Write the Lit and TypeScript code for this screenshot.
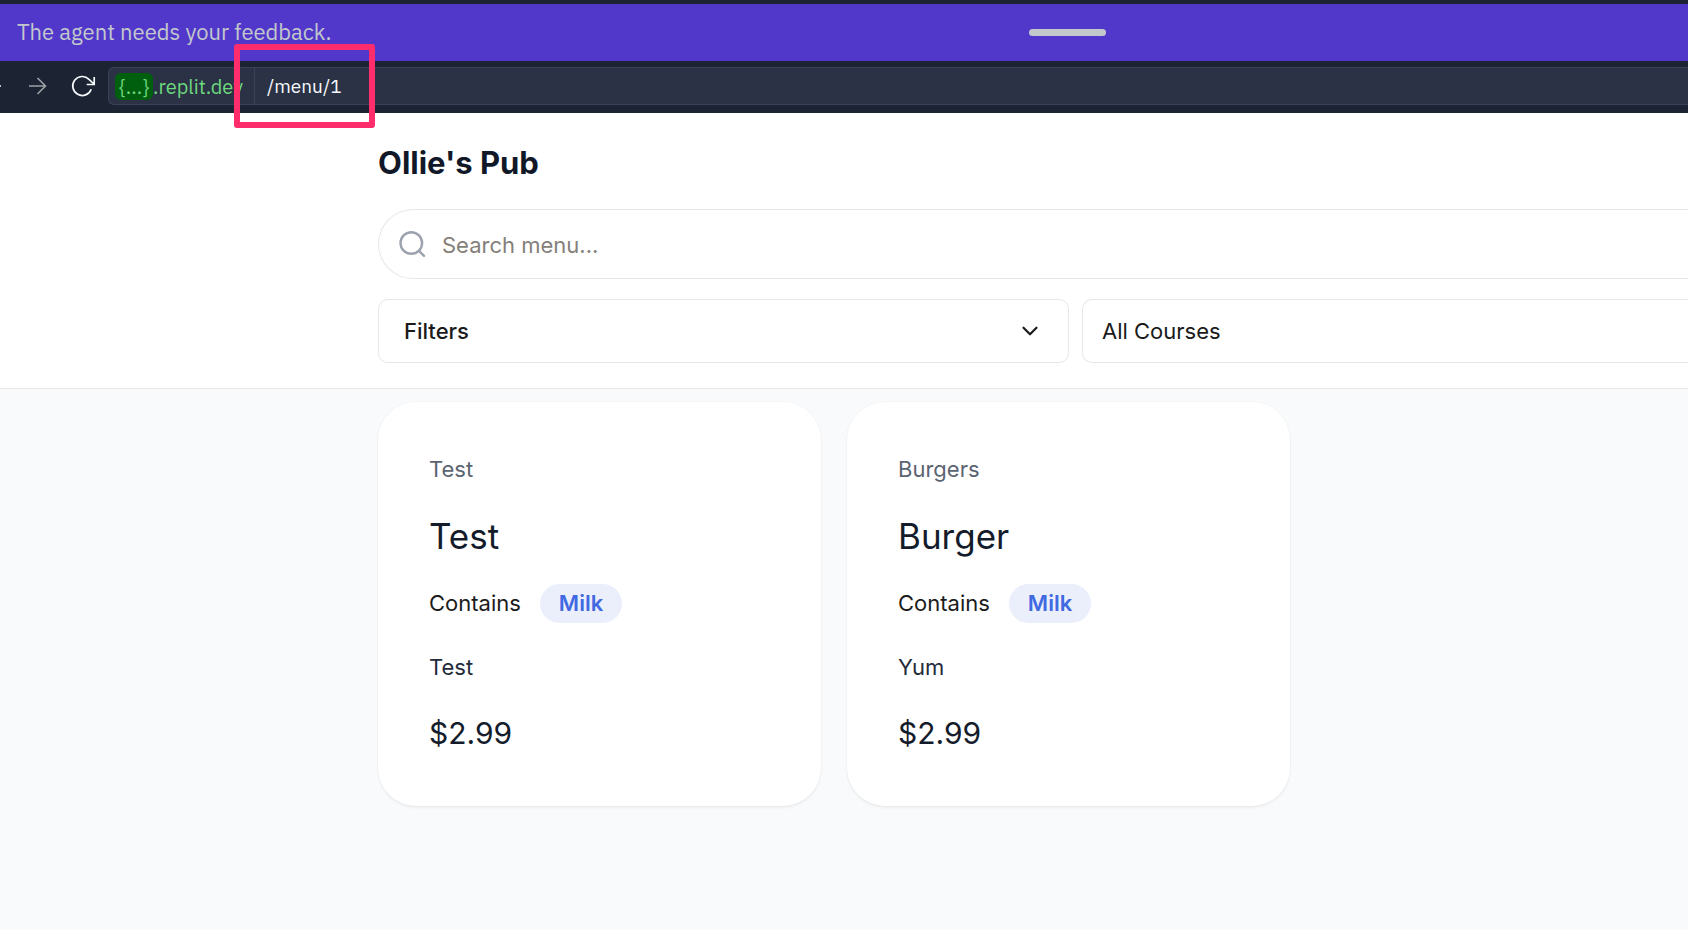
import { LitElement, html, css, svg } from "lit";
import { customElement, property } from "lit/decorators.js";

interface MenuItem {
  course: string;
  name: string;
  allergen: string;
  description: string;
  price: string;
}

const items: MenuItem[] = [
  { course: "Test", name: "Test", allergen: "Milk", description: "Test", price: "$2.99" },
  { course: "Burgers", name: "Burger", allergen: "Milk", description: "Yum", price: "$2.99" },
];

@customElement("menu-card")
export class MenuCard extends LitElement {
  static styles = css`
    :host {
      display: block;
    }
    .card {
      display: flex;
      flex-direction: column;
      gap: 24px;
      padding: 51px 51px 47px;
      border-radius: 38px;
      background: #fff;
      box-shadow: 0 0 1px 1px rgba(15, 23, 42, 0.02), 0 2px 3px rgba(15, 23, 42, 0.05);
    }
    .course,
    .name,
    .description,
    .price {
      margin: 0;
      font-weight: 400;
    }
    .course,
    .description {
      font-size: 22px;
      line-height: 32px;
    }
    .course {
      margin-bottom: 4px;
      color: #5b6472;
    }
    .description {
      color: #232b3a;
    }
    .name {
      font-size: 35px;
      line-height: 47px;
      color: #141c2b;
    }
    .price {
      font-size: 30px;
      line-height: 52px;
      color: #141c2b;
    }
    .allergens {
      display: flex;
      align-items: center;
      gap: 19px;
      margin-bottom: 4px;
      font-size: 22px;
      line-height: 39px;
      color: #1c1c1c;
    }
    .pill {
      padding: 0 19px;
      border-radius: 20px;
      background: #ebeffc;
      color: #4169e1;
      font-weight: 600;
    }
  `;

  @property({ attribute: false }) item!: MenuItem;

  render() {
    return html`
      <article class="card">
        <p class="course">${this.item.course}</p>
        <h2 class="name">${this.item.name}</h2>
        <div class="allergens">
          <span>Contains</span><span class="pill">${this.item.allergen}</span>
        </div>
        <p class="description">${this.item.description}</p>
        <p class="price">${this.item.price}</p>
      </article>
    `;
  }
}

const arrow = svg`<path d="M4 12h16M12.5 4l8 8-8 8" />`;

@customElement("app-root")
export class AppRoot extends LitElement {
  static styles = css`
    :host {
      display: block;
      min-height: 100vh;
      overflow: hidden;
      background: #f9fafb;
      font-family: Inter, "Liberation Sans", sans-serif;
      --indent: 378px;
    }
    *,
    *::before {
      box-sizing: border-box;
    }
    button,
    input,
    select {
      font: inherit;
      margin: 0;
    }
    svg {
      display: block;
      fill: none;
      stroke: currentColor;
      stroke-linecap: round;
      stroke-linejoin: round;
    }

    .banner {
      display: grid;
      grid-template-columns: 1029px auto;
      align-items: center;
      height: 61px;
      border-top: 4px solid #1c2333;
      background: #5238ca;
      color: #c2c8cc;
      font-family: "IBM Plex Sans", "Noto Sans", sans-serif;
      font-size: 22px;
      line-height: 32px;
    }
    .banner-text {
      margin: 0;
      padding: 0 0 2px 17px;
    }
    .handle {
      width: 77px;
      height: 7px;
      border-radius: 4px;
      background: #c2c8cc;
    }

    .nav {
      position: relative;
      display: flex;
      align-items: center;
      height: 52px;
      padding-bottom: 2px;
      background: #1c2333;
      color: #fff;
      font-family: "IBM Plex Sans", "Noto Sans", sans-serif;
      font-size: 20px;
    }
    .tools {
      display: flex;
      align-items: center;
      gap: 20px;
      margin: 0 11px 0 -19px;
    }
    .tool {
      padding: 0;
      border: 0;
      background: none;
      color: #9da2a6;
    }
    .tool.back,
    .tool.reload {
      color: #f5f9fc;
    }
    .tool.back svg {
      transform: scaleX(-1);
    }
    .tool svg {
      stroke-linecap: butt;
      stroke-linejoin: miter;
    }
    .address {
      display: flex;
      flex: 1;
      height: 38px;
      border: 1px solid #3a4159;
      border-right: 0;
      border-radius: 6px 0 0 6px;
      background: #2b3245;
    }
    .host {
      display: flex;
      align-items: center;
      width: 146px;
      padding-left: 6px;
      border-right: 1px solid #3a4159;
      color: #6cd97e;
      white-space: nowrap;
    }
    .token {
      width: 38px;
      border-radius: 6px;
      background: #005e0f;
      line-height: 27px;
      text-align: center;
    }
    .path {
      flex: 1;
      min-width: 0;
      padding: 0 12px;
      border: 0;
      outline: 0;
      background: none;
      color: #f5f9fc;
      font-size: 19px;
    }
    .highlight {
      position: absolute;
      left: 234px;
      top: -17px;
      width: 141px;
      height: 84px;
      border: 6px solid #ff2d6b;
      border-radius: 3px;
      pointer-events: none;
    }

    .header {
      display: flex;
      flex-direction: column;
      gap: 20px;
      padding: 24px 0 25px var(--indent);
      border-bottom: 1px solid #e7e7e8;
      background: #fff;
    }
    .title {
      margin: 0;
      font-size: 31px;
      line-height: 52px;
      font-weight: 700;
      color: #111827;
    }
    .search {
      display: flex;
      align-items: center;
      gap: 13px;
      height: 70px;
      padding-left: 18px;
      border: 1px solid #e7e7e8;
      border-right: 0;
      border-radius: 35px 0 0 35px;
      color: #9ca3af;
    }
    .search-input {
      flex: 1;
      min-width: 0;
      padding: 2px 0 0;
      border: 0;
      outline: 0;
      background: none;
      font-size: 22px;
      color: #1c1c1c;
    }
    .search-input::placeholder {
      color: #857f7a;
      opacity: 1;
    }
    .filters {
      display: grid;
      grid-template-columns: 691px 1fr;
      gap: 13px;
    }
    .filter,
    .course-select {
      height: 64px;
      border: 1px solid #e7e7e8;
      border-radius: 10px;
      background: #fff;
      font-size: 22px;
      color: #1a1a1a;
    }
    .filter {
      display: flex;
      align-items: center;
      justify-content: space-between;
      padding: 0 25px;
      font-weight: 500;
    }
    .course-select {
      appearance: none;
      min-width: 0;
      padding: 0 19px;
      border-right: 0;
      border-radius: 10px 0 0 10px;
    }

    .cards {
      display: grid;
      grid-template-columns: repeat(auto-fill, 443px);
      gap: 26px;
      padding: 13px 0 26px var(--indent);
    }
  `;

  render() {
    return html`
      <div class="banner">
        <p class="banner-text">The agent needs your feedback.</p>
        <div class="handle"></div>
      </div>
      <nav class="nav">
        <div class="tools">
          <button class="tool back" aria-label="Back">
            <svg width="24" height="24" viewBox="0 0 24 24" stroke-width="1.6">${arrow}</svg>
          </button>
          <button class="tool" aria-label="Forward">
            <svg width="24" height="24" viewBox="0 0 24 24" stroke-width="1.6">${arrow}</svg>
          </button>
          <button class="tool reload" aria-label="Reload">
            <svg width="28" height="28" viewBox="0 0 28 28" stroke-width="1.7">
              <path d="M22.2 17.2A9.5 9.5 0 1 1 20 7.3L25 12M25.2 5v7.5h-7.5" />
            </svg>
          </button>
        </div>
        <div class="address">
          <span class="host"><span class="token">{...}</span>.replit.dev</span>
          <input class="path" aria-label="Path" value="/menu/1" />
        </div>
        <div class="highlight"></div>
      </nav>
      <header class="header">
        <h1 class="title">Ollie's Pub</h1>
        <label class="search">
          <svg width="32" height="32" viewBox="0 0 32 32" stroke-width="2.4" aria-hidden="true">
            <circle cx="14.3" cy="15" r="10.8" />
            <path d="M22 22.8l5 5" />
          </svg>
          <input class="search-input" type="text" aria-label="Search menu" placeholder="Search menu..." />
        </label>
        <div class="filters">
          <button class="filter">
            Filters
            <svg width="26" height="26" viewBox="0 0 24 24" stroke-width="2" aria-hidden="true">
              <path d="M6 9l6 6 6-6" />
            </svg>
          </button>
          <select class="course-select" aria-label="Course">
            <option>All Courses</option>
          </select>
        </div>
      </header>
      <main class="cards">
        ${items.map((item) => html`<menu-card .item=${item}></menu-card>`)}
      </main>
    `;
  }
}
